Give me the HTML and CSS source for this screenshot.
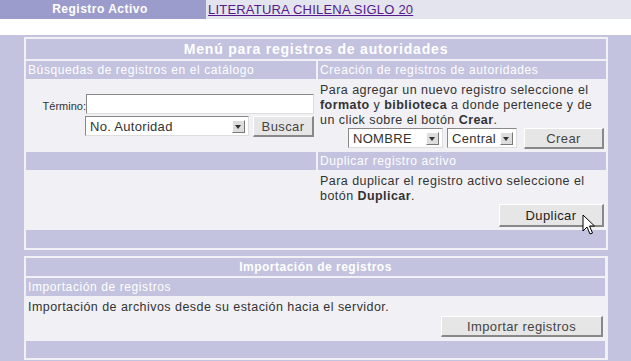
FILE: index.html
```html
<!DOCTYPE html>
<html>
<head>
<meta charset="utf-8">
<title>Autoridades</title>
<link rel="stylesheet" href="styles.css">
</head>
<body>
<div class="barra">
	<div class="activo">Registro Activo</div>
	<div class="titulo"><a href="#">LITERATURA CHILENA SIGLO 20</a></div>
</div>
<div class="separador"></div>
<div class="fondo">
	<div class="panel menu">
		<div class="cabecera">Menú para registros de autoridades</div>
		<div class="sub">Búsquedas de registros en el catálogo</div>
		<div class="sub">Creación de registros de autoridades</div>
		<div class="celda busqueda">
			<label class="etiqueta">Término:</label>
			<input class="campo" type="text">
			<span></span>
			<div class="fila">
				<div class="lista ancha"><span>No. Autoridad</span><i class="flecha"></i></div>
				<button class="boton buscar">Buscar</button>
			</div>
		</div>
		<div class="celda texto">
			<p>Para agregar un nuevo registro seleccione el <b>formato</b> y <b>biblioteca</b> a donde pertenece y de un click sobre el botón <b>Crear</b>.</p>
			<div class="acciones">
				<div class="lista nombre"><span>NOMBRE</span><i class="flecha"></i></div>
				<div class="lista central"><span>Central</span><i class="flecha"></i></div>
				<button class="boton crear">Crear</button>
			</div>
		</div>
		<div class="sub"></div>
		<div class="sub">Duplicar registro activo</div>
		<div class="celda"></div>
		<div class="celda texto">
			<p>Para duplicar el registro activo seleccione el botón <b>Duplicar</b>.</p>
			<div class="acciones">
				<button class="boton duplicar">Duplicar</button>
				<svg class="cursor" width="14" height="22" viewBox="0 0 14 22"><path d="M1 1 L1 17 L5 13 L8 20 L10.5 19 L7.5 12 L12.5 12 Z" fill="#fff" stroke="#000" stroke-width="1"/></svg>
			</div>
		</div>
		<div class="pie"></div>
	</div>

	<div class="panel importar">
		<div class="cabecera chica">Importación de registros</div>
		<div class="sub">Importación de registros</div>
		<div class="celda texto">
			<p>Importación de archivos desde su estación hacia el servidor.</p>
			<div class="acciones">
				<button class="boton importar-btn">Importar registros</button>
			</div>
		</div>
		<div class="pie"></div>
	</div>
</div>
</body>
</html>
```

FILE: styles.css
```css
body{
	margin:0;
	font-family:"Liberation Sans", Arial, Helvetica, sans-serif;
	font-size:12px;
	color:#333;
	background-color:#c3c3e0;
}
div.barra{
	display:flex;
	height:19px;
	background-color:#fff;
}
div.activo{
	width:206px;
	background-color:#9c9ccc;
	color:#fff;
	font-weight:bold;
	font-size:12px;
	letter-spacing:0.5px;
	line-height:19px;
	text-align:center;
	padding-right:6px;
	box-sizing:border-box;
}
div.titulo{
	flex:1;
	background-color:#e4e4ee;
	padding-left:2px;
	line-height:19px;
	font-size:13px;
	letter-spacing:0.2px;
}
div.titulo a{
	color:#551a8b;
}
div.separador{
	height:16px;
	background-color:#fff;
}
div.fondo{
	padding:2px 23px 6px 24px;
}
div.panel{
	display:grid;
	background-color:#f0f0f5;
	padding:2px 3px 2px 2px;
	gap:2px;
}
div.menu{
	grid-template-columns:290px 288px;
	grid-template-rows:20px 18px 69px 18px 56px 18px;
}
div.importar{
	margin-top:6px;
	grid-template-columns:1fr;
	grid-template-rows:18px 18px 41px 17px;
}
div.cabecera{
	grid-column:1 / -1;
	background-color:#c3c3e0;
	color:#fff;
	font-weight:bold;
	font-size:14px;
	letter-spacing:0.8px;
	text-align:center;
	line-height:20px;
}
div.cabecera.chica{
	font-size:12px;
	letter-spacing:0.5px;
	line-height:18px;
}
div.sub{
	background-color:#c3c3e0;
	color:#fff;
	padding-left:2px;
	line-height:18px;
	letter-spacing:0.6px;
}
div.pie{
	grid-column:1 / -1;
	background-color:#c3c3e0;
}
div.celda{
	background-color:#f0f0f5;
}
div.busqueda{
	display:grid;
	grid-template-columns:60px 228px;
	align-content:center;
	row-gap:2px;
}
label.etiqueta{
	font-size:11px;
	text-align:right;
	align-self:end;
	padding-bottom:2px;
}
input.campo{
	box-sizing:border-box;
	height:20px;
	margin:0;
	border:1px solid #888;
	border-right-color:#ddd;
	border-bottom-color:#ddd;
	background-color:#fff;
}
div.fila{
	display:flex;
	gap:4px;
	margin-left:-1px;
}
div.lista{
	box-sizing:border-box;
	display:flex;
	align-items:center;
	justify-content:space-between;
	height:20px;
	padding:0 3px 0 4px;
	background-color:#fff;
	border:1px solid #888;
	border-right-color:#ddd;
	border-bottom-color:#ddd;
	font-size:13px;
	letter-spacing:0.3px;
}
div.ancha{
	width:164px;
}
div.nombre{
	width:95px;
}
div.central{
	width:70px;
}
i.flecha{
	box-sizing:border-box;
	width:13px;
	height:13px;
	border:1px solid #fff;
	border-right-color:#777;
	border-bottom-color:#777;
	background-color:#ddd;
	position:relative;
}
i.flecha:after{
	content:"";
	position:absolute;
	left:2px;
	top:4px;
	border-left:3.5px solid transparent;
	border-right:3.5px solid transparent;
	border-top:4px solid #333;
}
button.boton{
	box-sizing:border-box;
	height:21px;
	margin:0;
	padding:0;
	font-family:"Liberation Sans", Arial, Helvetica, sans-serif;
	font-size:13px;
	letter-spacing:0.4px;
	color:#444;
	background-color:#e6e6e6;
	border:1px solid #fff;
	border-right:2px solid #888;
	border-bottom:2px solid #888;
}
button.buscar{
	width:61px;
}
button.crear{
	width:80px;
	margin-left:3px;
}
button.duplicar{
	width:105px;
	height:23px;
	color:#222;
}
button.importar-btn{
	width:162px;
}
div.texto{
	padding:2px 2px 0 2px;
	display:flex;
	flex-direction:column;
}
div.texto p{
	margin:0;
	font-size:12.5px;
	line-height:15px;
	letter-spacing:0.45px;
}
div.texto b{
	color:#333;
}
div.acciones{
	display:flex;
	justify-content:flex-end;
	gap:4px;
	margin-top:auto;
	margin-bottom:2px;
	position:relative;
}
svg.cursor{
	position:absolute;
	right:8px;
	top:10px;
}
```
